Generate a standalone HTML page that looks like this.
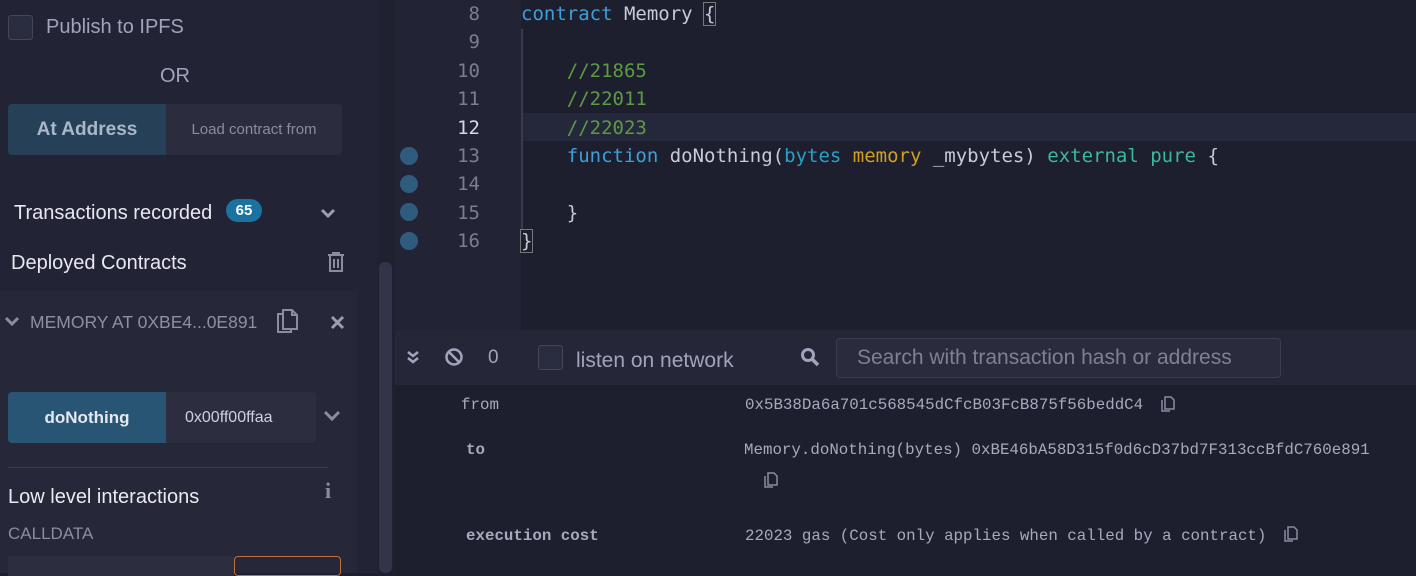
<!DOCTYPE html>
<html><head><style>
*{margin:0;padding:0;box-sizing:border-box}
body{width:1416px;height:573px;overflow:hidden;background:#1e1f2e;font-family:"Liberation Sans",sans-serif;position:relative;color:#a2a3bd}
.a{position:absolute}
.mono{font-family:"DejaVu Sans Mono","Liberation Mono",monospace}
.code{font-size:19px;white-space:pre;color:#c8c9d9}
.ln{font-size:19px;color:#7b7d90;text-align:right;width:80px}
.kw{color:#3d9fd9}.cm{color:#5d9a44}.ty{color:#2a9fc8}.mem{color:#d0a021}.pu{color:#3ab8a0}
.dot{width:18px;height:18px;border-radius:50%;background:#2f5c7e;left:400px}
.tx{font-family:"Liberation Mono",monospace;font-size:15.8px;color:#a8a9bd}
</style></head><body>
<div class="a" style="left:0;top:0;width:378px;height:573px;background:#222335"></div>
<div class="a" style="left:378px;top:0;width:17px;height:573px;background:#1f2030"></div>
<div class="a" style="left:379px;top:262px;width:13px;height:311px;background:#32344a;border-radius:6px"></div>
<div class="a" style="left:8px;top:15px;width:25px;height:25px;border:1px solid #44465a;border-radius:3px;background:#2a2c3f"></div>
<div class="a" style="left:46px;top:16px;font-size:20px;color:#a2a3bd">Publish to IPFS</div>
<div class="a" style="left:160px;top:65px;font-size:20px;color:#a2a3bd">OR</div>
<div class="a" style="left:8px;top:104px;width:158px;height:51px;background:#264058;border-radius:4px 0 0 4px;color:#a9b8c8;font-size:19px;line-height:51px;text-align:center;font-weight:bold">At Address</div>
<div class="a" style="left:166px;top:104px;width:176px;height:51px;background:#2b2d3f;border-radius:0 4px 4px 0;color:#8a8ca0;font-size:15px;line-height:51px;text-align:center">Load contract from</div>
<div class="a" style="left:14px;top:202px;font-size:20px;color:#e8e8f0">Transactions recorded</div>
<div class="a" style="left:226px;top:199px;width:36px;height:23px;border-radius:12px;background:#1a72a0;color:#fff;font-size:15px;font-weight:bold;text-align:center;line-height:23px">65</div>
<svg class="a" style="left:320px;top:207px" width="16" height="12"><path d="M2 3l6 6 6-6" stroke="#9a9cb0" stroke-width="3" fill="none"/></svg>
<div class="a" style="left:11px;top:252px;font-size:20px;color:#e8e8f0">Deployed Contracts</div>
<svg class="a" style="left:326px;top:251px" width="20" height="22"><path d="M2 4h16M7 4V2h6v2M4 5v15h12V5M8 8v9M12 8v9" stroke="#8a8ca0" stroke-width="2" fill="none"/></svg>
<div class="a" style="left:0;top:291px;width:357px;height:282px;background:#262839"></div>
<svg class="a" style="left:4px;top:315px" width="16" height="12"><path d="M2 3l6 6 6-6" stroke="#8a8ca0" stroke-width="3" fill="none"/></svg>
<div class="a" style="left:30px;top:312px;font-size:17.5px;color:#8d8fa3">MEMORY AT 0XBE4...0E891</div>
<svg class="a" style="left:275px;top:308px" width="24" height="26"><path d="M8 2h9l5 5v14H8z M17 2v5h5 M8 6H3v18h13v-3" stroke="#8a8ca0" stroke-width="2" fill="none"/></svg>
<svg class="a" style="left:330px;top:315px" width="15" height="15"><path d="M2 2l11 11M13 2L2 13" stroke="#9a9cb0" stroke-width="3"/></svg>
<div class="a" style="left:8px;top:392px;width:158px;height:51px;background:#285573;border-radius:4px 0 0 4px;color:#e4e8f0;font-size:17px;font-weight:bold;line-height:51px;text-align:center">doNothing</div>
<div class="a" style="left:166px;top:392px;width:150px;height:51px;background:#2c2e40;border-radius:0 4px 4px 0;color:#cfd0dc;font-size:16px;line-height:51px;padding-left:19px">0x00ff00ffaa</div>
<svg class="a" style="left:323px;top:410px" width="18" height="12"><path d="M2 2l7 7 7-7" stroke="#8a8ca0" stroke-width="3" fill="none"/></svg>
<div class="a" style="left:8px;top:467px;width:320px;height:1px;background:#3a3c50"></div>
<div class="a" style="left:8px;top:486px;font-size:20px;color:#eaeaf0">Low level interactions</div>
<div class="a" style="left:325px;top:478px;font-size:22px;color:#8a8ca0;font-weight:bold;font-family:'Liberation Serif',serif">i</div>
<div class="a" style="left:8px;top:524px;font-size:17px;color:#8a8ca0">CALLDATA</div>
<div class="a" style="left:8px;top:556px;width:226px;height:20px;background:#2c2e40"></div>
<div class="a" style="left:234px;top:556px;width:107px;height:20px;border:1px solid #c0703a;border-radius:4px"></div>
<div class="a" style="left:395px;top:0;width:126px;height:330px;background:#222335"></div>
<div class="a" style="left:521px;top:113px;width:895px;height:28px;background:#25273a"></div>
<div class="a" style="left:521px;top:29px;width:2px;height:200px;background:#3a3c4e"></div>
<div class="a ln mono" style="left:400px;top:0px;line-height:28.4px">8<br>9<br>10<br>11<br><span style="color:#d8d9e4">12</span><br>13<br>14<br>15<br>16</div>
<div class="a dot" style="top:147px"></div><div class="a dot" style="top:175px"></div><div class="a dot" style="top:203px"></div><div class="a dot" style="top:232px"></div>
<div class="a code mono" style="left:521px;top:0px;line-height:28.4px"><span class="kw">contract</span> Memory <span style="outline:1px solid #777;">{</span>

    <span class="cm">//21865</span>
    <span class="cm">//22011</span>
    <span class="cm">//22023</span>
    <span class="kw">function</span> doNothing(<span class="ty">bytes</span> <span class="mem">memory</span> _mybytes) <span class="pu">external</span> <span class="pu">pure</span> {

    }
<span style="outline:1px solid #777;">}</span></div>
<div class="a" style="left:395px;top:330px;width:1021px;height:55px;background:#252738"></div>
<svg class="a" style="left:405px;top:349px" width="16" height="16"><path d="M3 3l5 4 5-4M3 9l5 4 5-4" stroke="#a2a3bd" stroke-width="2.5" fill="none"/></svg>
<svg class="a" style="left:444px;top:347px" width="20" height="20"><circle cx="10" cy="10" r="7.5" stroke="#a2a3bd" stroke-width="2.5" fill="none"/><path d="M5 5l10 10" stroke="#a2a3bd" stroke-width="2.5"/></svg>
<div class="a" style="left:488px;top:347px;font-size:19px;color:#a2a3bd">0</div>
<div class="a" style="left:538px;top:345px;width:25px;height:25px;border:1px solid #44465a;border-radius:3px;background:#2a2c3f"></div>
<div class="a" style="left:576px;top:349px;font-size:21px;color:#a2a3bd">listen on network</div>
<svg class="a" style="left:800px;top:347px" width="21" height="21"><circle cx="8" cy="8" r="5.5" stroke="#a2a3bd" stroke-width="3" fill="none"/><path d="M12 12l6 6" stroke="#a2a3bd" stroke-width="3.5"/></svg>
<div class="a" style="left:836px;top:338px;width:445px;height:40px;border:1px solid #3a3c50;border-radius:4px;background:#2a2c3e;color:#7e8094;font-size:21px;line-height:38px;padding-left:20px">Search with transaction hash or address</div>
<div class="a tx" style="left:461px;top:396px">from</div>
<div class="a tx" style="left:745px;top:396px">0x5B38Da6a701c568545dCfcB03FcB875f56beddC4</div>
<div class="a tx" style="left:466px;top:441px;font-weight:bold">to</div>
<div class="a tx" style="left:744px;top:441px">Memory.doNothing(bytes) 0xBE46bA58D315f0d6cD37bd7F313ccBfdC760e891</div>
<div class="a tx" style="left:466px;top:527px;font-weight:bold">execution cost</div>
<div class="a tx" style="left:745px;top:527px">22023 gas (Cost only applies when called by a contract)</div>
<svg class="a" style="left:1160px;top:396px" width="15" height="16"><path d="M5 1h6l3 3v9H5z M2 4v11h8" stroke="#8a8ca0" stroke-width="1.5" fill="none"/></svg>
<svg class="a" style="left:763px;top:472px" width="15" height="16"><path d="M5 1h6l3 3v9H5z M2 4v11h8" stroke="#8a8ca0" stroke-width="1.5" fill="none"/></svg>
<svg class="a" style="left:1283px;top:526px" width="15" height="16"><path d="M5 1h6l3 3v9H5z M2 4v11h8" stroke="#8a8ca0" stroke-width="1.5" fill="none"/></svg>
</body></html>
